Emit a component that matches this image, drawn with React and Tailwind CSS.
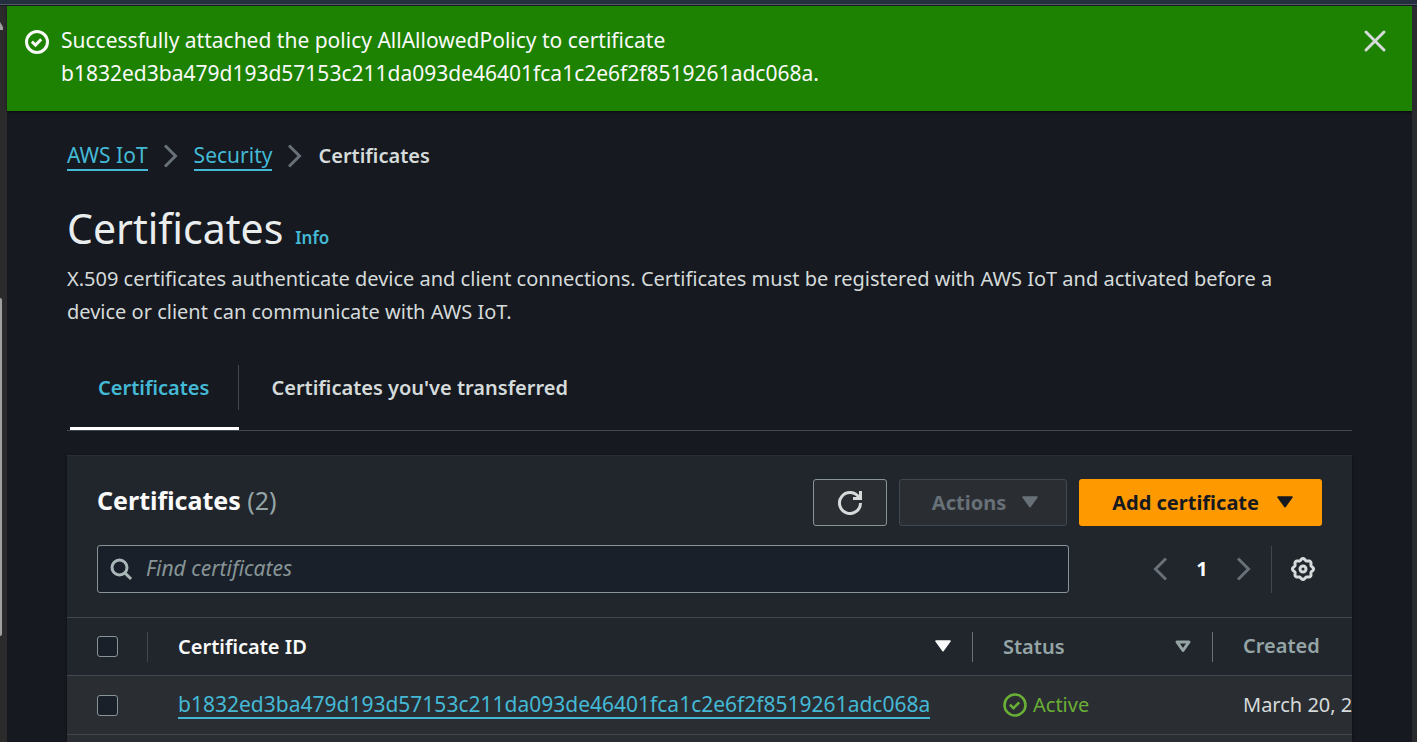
import React from "react";

const CERT_ID = "b1832ed3ba479d193d57153c211da093de46401fca1c2e6f2f8519261adc068a";

function Icon({ children, className = "", width = 2 }) {
  return (
    <svg
      viewBox="0 0 16 16"
      aria-hidden="true"
      className={`h-6 w-6 shrink-0 ${className}`}
      fill="none"
      stroke="currentColor"
      strokeWidth={width}
    >
      {children}
    </svg>
  );
}

const CheckCircle = ({ className, width }) => (
  <Icon className={className} width={width}>
    <circle cx="8" cy="8" r="7" />
    <path d="m4.6 7.8 2.4 2.3 3.8-3.9" />
  </Icon>
);

const Caret = ({ hollow = false, className = "" }) => (
  <Icon className={className} width={hollow ? 2 : 1}>
    {hollow ? (
      <path d="M4 5.3h8L8 11z" strokeLinejoin="round" />
    ) : (
      <path d="M3.3 4.7h9.4L8 11.2z" fill="currentColor" strokeLinejoin="round" />
    )}
  </Icon>
);

const Chevron = ({ left = false }) => (
  <Icon>{left ? <path d="M12 1 5 8l7 7" /> : <path d="m4 1 7 7-7 7" />}</Icon>
);

const gearPath =
  Array.from({ length: 160 }, (_, i) => {
    const a = (i / 160) * Math.PI * 2;
    const r = 6.4 + 0.6 * Math.cos(8 * a);
    return `${i ? "L" : "M"}${(8 + r * Math.sin(a)).toFixed(2)} ${(8 - r * Math.cos(a)).toFixed(2)}`;
  }).join("") + "Z";

const Checkbox = ({ label }) => (
  <input
    type="checkbox"
    aria-label={label}
    className="block h-[21px] w-[21px] appearance-none rounded-[3px] border border-[#879596] bg-[#1a2029]"
  />
);

const linkClass = "border-b-2 border-[#44b9d6] text-[21px] text-[#44b9d6]";

export default function App() {
  return (
    <div className="flex h-screen flex-col overflow-hidden bg-[#16191f] font-['Noto_Sans',sans-serif] text-[20px] leading-[33px] text-[#d5dbdb]">
      <div className="h-[5px] shrink-0 border-b border-[#545b64] bg-[#232f3e]" />
      <div className="flex min-h-0 flex-1 pt-px">
        <div className="w-[7px] shrink-0 bg-[#2b2b2b]">
          <svg viewBox="0 0 3 8" className="mt-4 h-2 w-[3px] fill-[#a0a0a0]" aria-hidden="true">
            <path d="M0 0 3 5v3H0z" />
          </svg>
          <div className="mt-[268px] h-[338px] w-[2px] rounded-r-sm bg-[#a0a0a0]" />
        </div>

        <div className="flex min-w-0 flex-1 flex-col">
          <div
            role="status"
            className="flex shrink-0 items-start gap-3 bg-[#1d8102] pt-[18px] pr-[25px] pb-[21px] pl-[18px] text-[#fafafa] shadow-[0_1px_2px_#000000a0]"
          >
            <CheckCircle className="mt-[6px]" />
            <p className="flex-1 text-[21px]">
              Successfully attached the policy AllAllowedPolicy to certificate
              <br />
              {CERT_ID}.
            </p>
            <button type="button" aria-label="Dismiss" className="mt-[5px] text-[#d5dbdb]">
              <Icon>
                <path d="m2 2 12 12M14 2 2 14" strokeLinecap="round" />
              </Icon>
            </button>
          </div>

          <main className="px-[60px]">
            <nav aria-label="Breadcrumb" className="flex items-center gap-[11px] pt-[30px] text-[#687078]">
              <a href="#iot" className={`leading-[27px] ${linkClass}`}>AWS IoT</a>
              <Chevron />
              <a href="#security" className={`leading-[27px] ${linkClass}`}>Security</a>
              <Chevron />
              <span className="leading-[30px] font-semibold text-[#d5dbdb]">Certificates</span>
            </nav>

            <div className="mt-[30px] flex items-baseline gap-3">
              <h1 className="text-[41px] leading-[54px] text-[#eaeded]">Certificates</h1>
              <a href="#info" className="text-[17px] font-semibold text-[#44b9d6]">Info</a>
            </div>
            <p className="mt-[7px] pr-9">
              X.509 certificates authenticate device and client connections. Certificates must be registered with AWS IoT and activated before a
              device or client can communicate with AWS IoT.
            </p>

            <div role="tablist" className="mt-[37px] flex border-b border-[#414750] pl-[3px] font-semibold">
              <button
                type="button"
                role="tab"
                aria-selected="true"
                className="border-b-[3px] border-white pb-[17px] text-[#44b9d6]"
              >
                <span className="block border-r border-[#414750] py-[6px] pr-[29px] pl-7">Certificates</span>
              </button>
              <button type="button" role="tab" aria-selected="false" className="px-8 pt-[6px] pb-[26px]">
                Certificates you've transferred
              </button>
            </div>

            <section className="mt-6 overflow-hidden border-t border-[#2a2e33] bg-[#21252c] shadow-[0_1px_2px_#000000a0]">
              <div className="flex items-center gap-3 px-[30px] pt-[23px]">
                <h2 className="flex-1 pb-1 text-[25px] font-bold text-[#fafafa]">
                  Certificates <span className="font-normal text-[#95a5a6]">(2)</span>
                </h2>
                <button
                  type="button"
                  aria-label="Refresh"
                  className="flex h-[47px] w-[74px] items-center justify-center rounded-[3px] border border-[#879596] bg-[#2a2e33]"
                >
                  <Icon>
                    <path d="M10 5h5V0" />
                    <path d="M15 8a7 7 0 1 1-1-3.6" />
                  </Icon>
                </button>
                <button
                  type="button"
                  disabled
                  className="flex h-[47px] items-center gap-3 rounded-[3px] border border-[#414750] bg-[#2a2e33] pr-6 pb-px pl-8 font-bold text-[#687078]"
                >
                  Actions
                  <Caret />
                </button>
                <button
                  type="button"
                  className="flex h-[47px] items-center gap-[14px] rounded-[3px] bg-[#ff9900] pr-[25px] pb-px pl-[33px] font-bold text-[#16191f]"
                >
                  Add certificate
                  <Caret />
                </button>
              </div>

              <div className="flex items-center px-[30px] pt-[19px] pb-6">
                <label className="flex h-12 max-w-[972px] flex-1 items-center gap-[13px] rounded-[3px] border border-[#879596] bg-[#1a2029] px-[11px] text-[#aab7b8]">
                  <Icon>
                    <circle cx="7" cy="7" r="5" />
                    <path d="m10.5 10.5 4.2 4.2" />
                  </Icon>
                  <input
                    type="search"
                    aria-label="Find certificates"
                    placeholder="Find certificates"
                    className="min-w-0 flex-1 bg-transparent pb-[2px] text-[21px] outline-none placeholder:text-[#879596] placeholder:italic"
                  />
                </label>
                <div className="ml-auto flex items-center text-[#687078]">
                  <button type="button" aria-label="Previous page"><Chevron left /></button>
                  <button type="button" aria-current="page" className="w-[60px] pb-[2px] font-bold text-[#fafafa]">1</button>
                  <button type="button" aria-label="Next page"><Chevron /></button>
                  <span className="ml-[15px] h-[47px] w-px bg-[#414750]" />
                  <button type="button" aria-label="Preferences" className="mr-[7px] ml-[19px] text-[#d5dbdb]">
                    <Icon>
                      <path d={gearPath} strokeLinejoin="round" />
                      <circle cx="8" cy="8" r="2" />
                    </Icon>
                  </button>
                </div>
              </div>

              <table className="w-[1500px] table-fixed border-collapse text-left">
                <colgroup>
                  <col className="w-[81px]" />
                  <col className="w-[825px]" />
                  <col className="w-[240px]" />
                  <col />
                </colgroup>
                <thead>
                  <tr className="h-[58px] border-t border-[#414750] font-semibold">
                    <th className="p-0">
                      <div className="flex h-[30px] items-center border-r border-[#414750] pl-[30px]">
                        <Checkbox label="Select all certificates" />
                      </div>
                    </th>
                    <th className="p-0 font-semibold">
                      <div className="flex h-[30px] items-center justify-between border-r border-[#687078] pr-[17px] pb-px pl-[30px] text-[#fafafa]">
                        Certificate ID
                        <Caret />
                      </div>
                    </th>
                    <th className="p-0 font-semibold">
                      <div className="flex h-[30px] items-center justify-between border-r border-[#687078] pr-[17px] pb-px pl-[30px] text-[#95a5a6]">
                        Status
                        <Caret hollow />
                      </div>
                    </th>
                    <th className="p-0 pb-[2px] pl-[30px] font-semibold text-[#95a5a6]">Created</th>
                  </tr>
                </thead>
                <tbody className="bg-[#2a2e33]">
                  <tr className="h-[59px] border-y border-[#414750]">
                    <td className="p-0 pl-[30px]">
                      <Checkbox label="Select certificate" />
                    </td>
                    <td className="p-0 pb-[2px] pl-[30px]">
                      <a href="#certificate" className={`inline-block leading-[25px] ${linkClass}`}>{CERT_ID}</a>
                    </td>
                    <td className="p-0 pl-[30px] text-[#6aaf35]">
                      <span className="flex items-center gap-[6px]">
                        <CheckCircle width={1.7} />
                        <span className="pb-[2px]">Active</span>
                      </span>
                    </td>
                    <td className="p-0 pb-[2px] pl-[30px]">March 20, 2024</td>
                  </tr>
                  <tr className="h-[59px]">
                    <td colSpan={4} />
                  </tr>
                </tbody>
              </table>
            </section>
          </main>
        </div>

        <div className="w-[5px] shrink-0 bg-[#2a2b2f]" />
      </div>
    </div>
  );
}
